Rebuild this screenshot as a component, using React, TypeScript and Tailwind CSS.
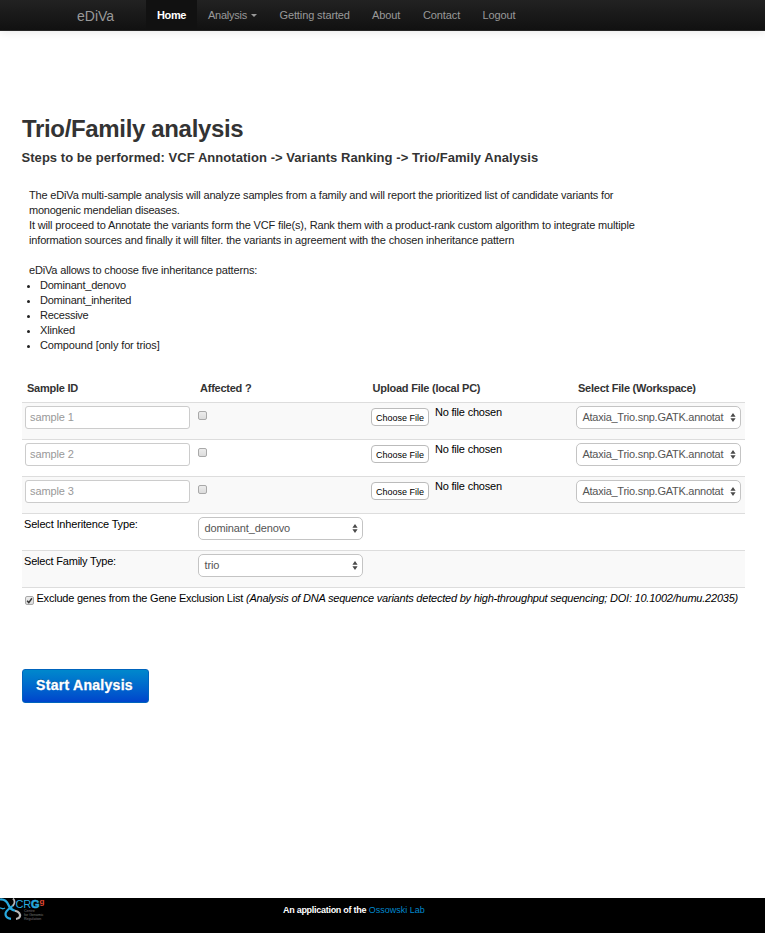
import React from "react";

const file = "Ataxia_Trio.snp.GATK.annotat";

function Arrows() {
  return (
    <svg className="ml-auto h-[9px] w-[6px] shrink-0" viewBox="0 0 6 9" fill="#4a4a4a">
      <path d="M3 0L5.6 3.7H.4zM3 9L5.6 5.3H.4z" />
    </svg>
  );
}

function Select({ label, tight = false }: { label: string; tight?: boolean }) {
  return (
    <div className="flex h-[23px] w-[165px] items-center rounded-[5px] border border-[#c4c4c4] bg-white pr-[4.5px] pl-[5.5px] text-[#555]">
      <span className={tight ? "tracking-[-0.26px] whitespace-nowrap" : "tracking-[-0.13px] whitespace-nowrap"}>{label}</span>
      <Arrows />
    </div>
  );
}

function Check({ checked = false }: { checked?: boolean }) {
  return (
    <span className="flex h-[9px] w-[9px] shrink-0 items-center justify-center rounded-[2px] border border-[#a9a9a9] bg-linear-to-b from-[#ececec] to-[#dcdcdc]">
      {checked && (
        <svg className="h-[7px] w-[7px] shrink-0" viewBox="0 0 8 8" fill="none" stroke="#333" strokeWidth="1.7">
          <path d="M1.3 4.2L3.2 6.4L6.8 1.4" />
        </svg>
      )}
    </span>
  );
}

const row = "grid h-[37px] w-[723px] grid-cols-[173px_174px_205px_171px] items-start border-t border-[#ddd] pt-[3px]";

function Sample({ n }: { n: number }) {
  return (
    <div className={row + (n % 2 ? " bg-[#f9f9f9]" : "")}>
      <div className="ml-[3px] flex h-[23px] w-[165px] items-center rounded-[3px] border border-[#ccc] bg-white px-1 tracking-[-0.12px] text-[#999]">
        <span>sample {n}</span>
      </div>
      <div className="pt-[5px] pl-[3px]"><Check /></div>
      <div className="flex pl-[2px]">
        <span className="mt-[2px] flex h-[18px] w-[58px] items-center justify-center rounded-[4px] border border-[#bbb] bg-white pt-[2px] text-[9px] whitespace-nowrap text-black">
          Choose File
        </span>
        <span className="ml-[6px] -mt-[1px] tracking-[-0.2px] text-black">No file chosen</span>
      </div>
      <div className="pl-[2px]"><Select label={file} tight /></div>
    </div>
  );
}

function Logo() {
  return (
    <svg className="h-[26px] w-[48px]" viewBox="0 0 48 26">
      <g fill="none" strokeWidth="2.2">
        <path d="M13 0.5C15.5 3 14.5 6 12.5 8" stroke="#b9b9b9" strokeWidth="1.8" />
        <path d="M12.5 8C9.5 10.5 5.5 12.5 5.5 16C5.5 19 8 20.5 11 20.8" stroke="#28a9df" />
        <path d="M0 1.5C5 1 7 3.5 8.5 7C9.8 10.5 12 12 15 12.8" stroke="#28a9df" />
        <path d="M15 12.8C19 13.8 20.8 16 19.8 18.8C19 20.5 18 20.9 16 21" stroke="#b9b9b9" />
        <path d="M0 9.8C2 11 3.5 11 5 10" stroke="#28a9df" strokeWidth="1.4" />
      </g>
      <text x="15.5" y="9.5" fontSize="11" fill="#28a9df" fontFamily="Liberation Sans, sans-serif" textLength="24">
        CR<tspan fontWeight="bold" stroke="#28a9df" strokeWidth="0.5">G</tspan>
      </text>
      <text x="39.5" y="6" fontSize="8" fontWeight="bold" fill="#e64b35" fontFamily="Liberation Sans, sans-serif">g</text>
      <g fontSize="3.6" fill="#777" fontFamily="Liberation Sans, sans-serif">
        <text x="24" y="14">Centre</text>
        <text x="24" y="18">for Genomic</text>
        <text x="24" y="22">Regulation</text>
      </g>
    </svg>
  );
}

export default function App() {
  return (
    <div className="flex h-[933px] w-[765px] flex-col bg-white font-['Liberation_Sans',Arial,sans-serif] text-[11px] leading-[15px] text-[#333]">
      <nav className="flex h-[31px] shrink-0 items-stretch border-b border-[#252525] bg-linear-to-b from-[#222] to-[#111] leading-[30px] tracking-[-0.12px] text-[#999] shadow-[0_1px_10px_rgba(0,0,0,0.1)]">
        <span className="w-[146px] pl-[77px] text-[14px] leading-[32px] tracking-normal">eDiVa</span>
        <b className="w-[51px] bg-[#111] text-center tracking-[-0.4px] text-white">Home</b>
        <span className="flex w-[72px] items-center pl-[11px] tracking-[-0.25px]">
          Analysis
          <i className="ml-[4px] border-x-[3px] border-t-[3px] border-x-transparent border-t-[#999]" />
        </span>
        <span className="w-[103px] pl-[10.5px]">Getting started</span>
        <span className="w-[51px]">About</span>
        <span className="w-[59.5px]">Contact</span>
        <span>Logout</span>
      </nav>

      <main className="flex-1 pl-[22px]">
        <h1 className="pt-[82px] text-[24px] leading-[32px] font-bold tracking-[-0.34px] whitespace-nowrap">Trio/Family analysis</h1>
        <h2 className="-ml-[0.5px] mt-[4px] text-[13px] leading-[18px] font-bold tracking-[0.05px] whitespace-nowrap">
          Steps to be performed: VCF Annotation -&gt; Variants Ranking -&gt; Trio/Family Analysis
        </h2>
        <div className="mt-[21px] ml-[7px] tracking-[-0.17px] whitespace-nowrap text-[#222]">
          <p>The eDiVa multi-sample analysis will analyze samples from a family and will report the prioritized list of candidate variants for</p>
          <p className="tracking-[-0.23px]">monogenic mendelian diseases.</p>
          <p className="tracking-[-0.155px]">It will proceed to Annotate the variants form the VCF file(s), Rank them with a product-rank custom algorithm to integrate multiple</p>
          <p className="tracking-[-0.16px]">information sources and finally it will filter. the variants in agreement with the chosen inheritance pattern</p>
          <p className="mt-[15px]">eDiVa allows to choose five inheritance patterns:</p>
          <ul className="list-disc pl-[11px]">
            <li className="tracking-[-0.23px]">Dominant_denovo</li>
            <li className="tracking-[-0.23px]">Dominant_inherited</li>
            <li className="tracking-[-0.25px]">Recessive</li>
            <li>Xlinked</li>
            <li className="tracking-[-0.13px]">Compound [only for trios]</li>
          </ul>
        </div>
        <div className="mt-[21px] grid h-[28px] w-[723px] grid-cols-[173px_174px_205px_171px] pt-[7px] font-bold tracking-[-0.24px]">
          <span className="pl-[5px]">Sample ID</span>
          <span className="pl-[5px]">Affected ?</span>
          <span className="pl-[3.5px]">Upload File (local PC)</span>
          <span className="pl-[4px]">Select File (Workspace)</span>
        </div>
        <Sample n={1} />
        <Sample n={2} />
        <Sample n={3} />
        <div className={row}>
          <span className="pl-[2px] tracking-[-0.17px] text-black">Select Inheritence Type:</span>
          <div className="pl-[3px]"><Select label="dominant_denovo" /></div>
        </div>
        <div className={row + " bg-[#f9f9f9]"}>
          <span className="pl-[2px] tracking-[-0.2px] text-black">Select Family Type:</span>
          <div className="pl-[3px]"><Select label="trio" /></div>
        </div>
        <div className="flex w-[723px] border-t border-[#ddd] pt-[3px] pl-[3px] tracking-[-0.22px] whitespace-nowrap text-black">
          <span className="mt-[5px] mr-[2.5px]"><Check checked /></span>
          <span>Exclude genes from the Gene Exclusion List <i>(Analysis of DNA sequence variants detected by high-throughput sequencing; DOI: 10.1002/humu.22035)</i></span>
        </div>
        <button className="mt-[63px] block h-[34px] w-[127px] rounded-[3px] border border-[#0064bd] bg-linear-to-b from-[#0088cc] to-[#0044cc] pr-[2px] pb-[2px] text-[14px] font-bold tracking-[0.28px] whitespace-nowrap text-white [-webkit-text-stroke:0.3px_white] [text-shadow:0_-1px_0_rgba(0,0,0,0.25)]">
          Start Analysis
        </button>
      </main>

      <footer className="flex h-[35px] shrink-0 bg-black text-white">
        <div className="w-[283px]"><Logo /></div>
        <p className="pt-[5px] text-[9px] whitespace-nowrap"><b className="tracking-[-0.28px]">An application of the</b> <span className="text-[#0088cc]">Ossowski Lab</span></p>
      </footer>
    </div>
  );
}
